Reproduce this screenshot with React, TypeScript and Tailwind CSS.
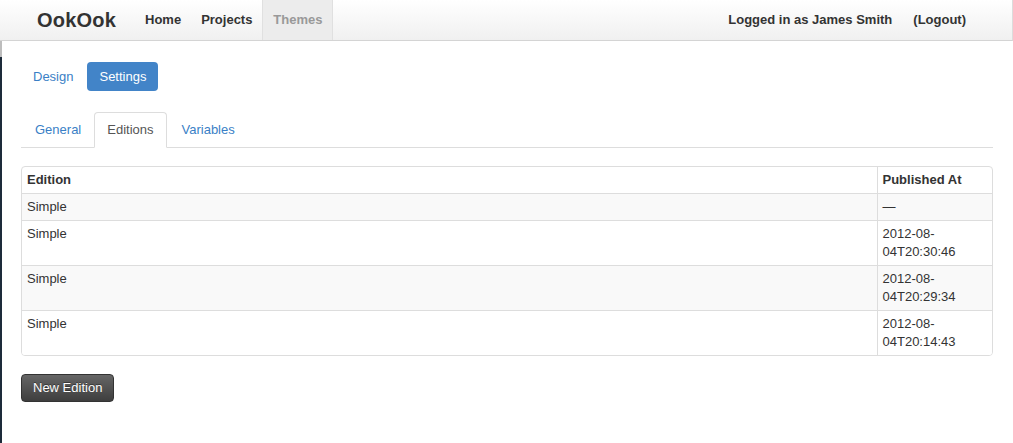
import React from "react";

const rows = [
  { name: "Simple", at: "—" },
  { name: "Simple", at: "2012-08-\n04T20:30:46" },
  { name: "Simple", at: "2012-08-\n04T20:29:34" },
  { name: "Simple", at: "2012-08-\n04T20:14:43" },
];

export default function App() {
  return (
    <div
      className="min-h-[443px] bg-white text-[13px] text-[#333] leading-[18px]"
      style={{ fontFamily: '"Liberation Sans", Arial, sans-serif' }}
    >
      {/* Navbar */}
      <div className="h-[41px] flex items-stretch bg-gradient-to-b from-white to-[#f0f0f0] border-b border-[#d4d4d4] border-r border-r-[#dcdcdc]">
        <div className="pl-[37px] pr-[21px] flex items-center text-[20px] font-bold text-[#333] tracking-[0.2px]">
          OokOok
        </div>
        <div className="flex items-stretch font-bold text-[13px]">
          <div className="px-[8px] flex items-center text-[#333]">Home</div>
          <div className="pl-[12px] pr-[10px] flex items-center text-[#333]">Projects</div>
          <div className="w-[71px] flex items-center justify-center text-[#999] bg-[#ececec] border-l border-r border-[#e0e0e0]">
            Themes
          </div>
        </div>
        <div className="ml-auto flex items-center font-bold text-[13px] text-[#333] pr-[46px]">
          <span>Logged in as James Smith</span>
          <span className="ml-[21px]">(Logout)</span>
        </div>
      </div>

      <div className="flex">
        <div className="w-[2px] flex flex-col">
          <div className="h-[16px] bg-[#bdbdbd]" />
          <div className="flex-1 bg-[#1d2b3a]" />
        </div>
        <div className="flex-1 min-h-[402px] pl-[19px] pr-[20px]">
          {/* Pills */}
          <div className="flex items-center gap-[14px] pt-[21px] pl-[12px]">
            <span className="text-[#3a7fc6]">Design</span>
            <span className="bg-[#4284c8] text-white rounded-[4px] h-[29px] px-[12px] flex items-center">
              Settings
            </span>
          </div>

          {/* Tabs */}
          <div className="mt-[21px] flex items-end border-b border-[#ddd] h-[36px]">
            <div className="px-[13px] pl-[14px] h-[35px] flex items-center text-[#3a7fc6]">General</div>
            <div className="-mb-px h-[36px] px-[12px] flex items-center border border-[#ddd] border-b-white rounded-t-[4px] bg-white text-[#555]">
              Editions
            </div>
            <div className="px-[15px] h-[35px] flex items-center text-[#3a7fc6]">Variables</div>
          </div>

          {/* Table */}
          <div className="mt-[18px] border border-[#ddd] rounded-[4px] overflow-hidden">
            <table className="w-full border-collapse">
              <thead>
                <tr>
                  <th className="text-left font-bold px-[5px] h-[26px] align-middle">Edition</th>
                  <th className="text-left font-bold px-[5px] w-[115px] border-l border-[#ddd]">Published At</th>
                </tr>
              </thead>
              <tbody>
                {rows.map((r, i) => (
                  <tr key={i} className={i % 2 === 0 ? "bg-[#f9f9f9]" : "bg-white"}>
                    <td className="border-t border-[#ddd] px-[5px] pt-[4px] pb-[4px] align-top">{r.name}</td>
                    <td className="border-t border-l border-[#ddd] px-[5px] pt-[4px] pb-[4px] align-top whitespace-pre-line leading-[18px]">
                      {r.at}
                    </td>
                  </tr>
                ))}
              </tbody>
            </table>
          </div>

          {/* Button */}
          <div className="mt-[18px]">
            <button className="h-[28px] px-[11px] rounded-[4px] text-white bg-gradient-to-b from-[#666] to-[#3e3e3e] border border-[#333] text-[13px] [text-shadow:0_-1px_0_rgba(0,0,0,0.4)]">
              New Edition
            </button>
          </div>
        </div>
      </div>
    </div>
  );
}
